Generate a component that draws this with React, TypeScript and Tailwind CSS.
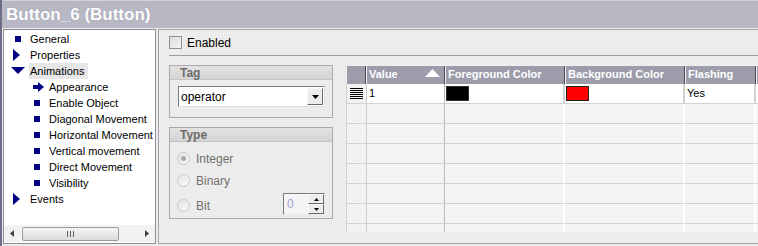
import React from 'react';

const font = { fontFamily: '"Liberation Sans", Arial, sans-serif' };

function Bullet({ x }: { x: number }) {
  return <span className="absolute top-[5px] w-[6px] h-[6px] bg-[#000080]" style={{ left: x }} />;
}

function TreeRow({ label, level, icon, active }: { label: string; level: 1 | 2; icon: 'bullet' | 'right' | 'down' | 'arrow'; active?: boolean }) {
  const textLeft = level === 1 ? 26 : 45;
  return (
    <div className="relative h-[16px] leading-[16px] text-[11px] text-black whitespace-nowrap">
      {icon === 'bullet' && <Bullet x={level === 1 ? 11 : 30} />}
      {icon === 'right' && (
        <svg className="absolute left-[9px] top-[2px]" width="7" height="12" viewBox="0 0 7 12">
          <path d="M0 0 L7 6 L0 12 Z" fill="#000080" />
        </svg>
      )}
      {icon === 'down' && (
        <svg className="absolute left-[7px] top-[4px]" width="14" height="7" viewBox="0 0 14 7">
          <path d="M0 0 L14 0 L7 7 Z" fill="#000080" />
        </svg>
      )}
      {icon === 'arrow' && (
        <svg className="absolute left-[29px] top-[3px]" width="11" height="10" viewBox="0 0 11 10">
          <path d="M0 3 L5 3 L5 0 L11 5 L5 10 L5 7 L0 7 Z" fill="#000080" />
        </svg>
      )}
      <span
        className={`absolute top-0 h-[16px] pr-[4px] ${active ? 'bg-[#e6e6e6]' : ''}`}
        style={{ left: textLeft - 1, paddingLeft: 1 }}
      >
        {label}
      </span>
    </div>
  );
}

function GroupBox({ title, className, children }: { title: string; className?: string; children: React.ReactNode }) {
  return (
    <div className={`border border-[#a9a9a9] flex flex-col ${className ?? ''}`}>
      <div className="h-[14px] bg-gradient-to-b from-[#e2e2e2] to-[#d4d4d4] border-b border-[#c4c4c4] pl-[10px] text-[12px] font-bold text-[#6c6c6c] leading-[14px]">
        {title}
      </div>
      {children}
    </div>
  );
}

function Radio({ label, checked }: { label: string; checked?: boolean }) {
  return (
    <div className="flex items-center h-[13px] text-[12px] text-[#707070]">
      <span className="w-[13px] h-[13px] rounded-full border border-[#c8c8c8] bg-gradient-to-br from-[#e4e4e4] to-[#f8f8f8] flex items-center justify-center">
        {checked && <span className="w-[5px] h-[5px] rounded-full bg-[#a8a8a8]" />}
      </span>
      <span className="ml-[6px]">{label}</span>
    </div>
  );
}

function HeaderCell({ w, children, className }: { w: number; children?: React.ReactNode; className?: string }) {
  return (
    <div
      className={`relative h-full shrink-0 border-l border-[#f0f0f4] border-r border-r-[#4a4a52] pl-[2px] text-white font-bold text-[11px] leading-[17px] whitespace-nowrap ${className ?? ''}`}
      style={{ width: w }}
    >
      {children}
    </div>
  );
}

const cols = [20, 79, 120, 120, 71, 40];

function GridRow({ first }: { first?: boolean }) {
  return (
    <div className={`flex h-[20px] shrink-0 ${first ? 'bg-white' : 'bg-[#f4f4f4]'}`}>
      <div className="shrink-0 w-[20px] h-full border-l border-l-[#cfcfcf] border-b border-b-[#d2d2d2] bg-[#f2f2f2] flex items-center justify-center">
        {first && (
          <svg width="13" height="12" viewBox="0 0 13 12">
            {[0.5, 2.5, 4.5, 6.5, 8.5, 10.5].map(y => (
              <line key={y} x1="0" x2="13" y1={y} y2={y} stroke="#000" strokeWidth="1" />
            ))}
          </svg>
        )}
      </div>
      <div className="shrink-0 w-[79px] h-full border-l border-[#c9c9cf] border-r border-r-[#b9b9c1] border-b border-b-[#d2d2d2] pl-[2px] text-[11px] leading-[19px]">
        {first && '1'}
      </div>
      <div className={`shrink-0 w-[120px] h-full border-b border-[#d2d2d2] border-r-2 ${first ? 'border-r-[#d2d2d2]' : 'border-r-white'} pt-[2px] pl-[1px]`}>
        {first && <div className="w-[23px] h-[15px] bg-black border border-[#303030]" />}
      </div>
      <div className={`shrink-0 w-[120px] h-full border-b border-[#d2d2d2] border-r-2 ${first ? 'border-r-[#d2d2d2]' : 'border-r-white'} pt-[2px] pl-[1px]`}>
        {first && <div className="w-[23px] h-[15px] bg-[#ff0000] border border-[#202020]" />}
      </div>
      <div className={`shrink-0 w-[71px] h-full border-b border-[#d2d2d2] border-r-2 ${first ? 'border-r-[#d2d2d2]' : 'border-r-white'} pl-[2px] text-[11px] leading-[19px]`}>
        {first && 'Yes'}
      </div>
      <div className="shrink-0 w-[40px] h-full border-b border-[#d2d2d2]" />
    </div>
  );
}

export default function App() {
  return (
    <div className="w-[758px] h-[246px] overflow-hidden bg-[#ececec] flex flex-col border-l-2 border-[#6e6e88]" style={font}>
      {/* Title bar */}
      <div className="h-[28px] shrink-0 bg-[#b8b8c4] border-t border-[#d0d0da] pl-[4px] flex items-center text-white font-bold text-[17px] [text-shadow:0_0_1px_#8888a0]">
        Button_6 (Button)
      </div>

      <div className="flex flex-1 min-h-0 pt-[1px] pb-[2px] pl-[1px]">
        {/* Tree */}
        <div className="w-[153px] shrink-0 bg-white border border-[#8c8c98] flex flex-col overflow-hidden">
          <div className="flex-1 pt-[1px]">
            <TreeRow label="General" level={1} icon="bullet" />
            <TreeRow label="Properties" level={1} icon="right" />
            <TreeRow label="Animations" level={1} icon="down" active />
            <TreeRow label="Appearance" level={2} icon="arrow" />
            <TreeRow label="Enable Object" level={2} icon="bullet" />
            <TreeRow label="Diagonal Movement" level={2} icon="bullet" />
            <TreeRow label="Horizontal Movement" level={2} icon="bullet" />
            <TreeRow label="Vertical movement" level={2} icon="bullet" />
            <TreeRow label="Direct Movement" level={2} icon="bullet" />
            <TreeRow label="Visibility" level={2} icon="bullet" />
            <TreeRow label="Events" level={1} icon="right" />
          </div>
          {/* horizontal scrollbar */}
          <div className="h-[17px] shrink-0 bg-[#f2f2f2] flex items-center px-[6px] mb-[1px]">
            <svg width="4" height="7" viewBox="0 0 4 7"><path d="M4 0 L0 3.5 L4 7 Z" fill="#404040" /></svg>
            <div className="ml-[8px] w-[97px] h-[14px] rounded-[2px] border border-[#9a9a9a] bg-gradient-to-b from-[#f4f4f4] to-[#dcdcdc] flex items-center justify-center gap-[2px]">
              <span className="w-px h-[6px] bg-[#606060]" />
              <span className="w-px h-[6px] bg-[#606060]" />
              <span className="w-px h-[6px] bg-[#606060]" />
            </div>
            <div className="flex-1" />
            <svg width="4" height="7" viewBox="0 0 4 7"><path d="M0 0 L4 3.5 L0 7 Z" fill="#404040" /></svg>
          </div>
        </div>

        {/* Right panel */}
        <div className="flex-1 ml-[2px] border border-[#a4a4a4] border-r-0 bg-[#ececec] flex flex-col">
          <div className="h-[26px] shrink-0 ml-[10px] border-b border-[#9e9e9e] flex items-center">
            <span className="w-[13px] h-[13px] border border-[#8e8f8f] bg-gradient-to-br from-[#dcdcdc] to-[#f4f4f4]" />
            <span className="ml-[5px] text-[12px] text-black">Enabled</span>
          </div>

          <div className="flex flex-1 min-h-0 pt-[9px]">
            <div className="w-[164px] ml-[10px] shrink-0 flex flex-col">
              <GroupBox title="Tag" className="h-[53px]">
                <div className="pl-[8px] pr-[7px] pt-[6px]">
                  <div className="h-[21px] bg-white border border-[#7a7a7a] border-r-[#e0e0e0] border-b-[#e0e0e0] flex items-center">
                    <span className="flex-1 pl-[2px] text-[12px] text-black">operator</span>
                    <span className="w-[16px] h-[17px] mr-[1px] bg-[#ececec] border border-[#f8f8f8] border-r-[#6a6a6a] border-b-[#6a6a6a] flex items-center justify-center">
                      <svg width="7" height="4" viewBox="0 0 7 4"><path d="M0 0 L7 0 L3.5 4 Z" fill="#000" /></svg>
                    </span>
                  </div>
                </div>
              </GroupBox>

              <GroupBox title="Type" className="h-[92px] mt-[9px]">
                <div className="flex flex-col pl-[7px] pt-[10px] gap-[9px]">
                  <Radio label="Integer" checked />
                  <Radio label="Binary" />
                  <div className="flex items-center">
                    <Radio label="Bit" />
                    <div className="ml-auto mr-[7px] -mt-[3px] w-[42px] h-[22px] bg-[#f4f4f4] border border-[#7a7a7a] border-r-[#e8e8e8] border-b-[#e8e8e8] flex items-center">
                      <span className="flex-1 pl-[3px] text-[12px] text-[#a0a0d8]">0</span>
                      <div className="w-[16px] h-full flex flex-col">
                        <span className="flex-1 bg-[#ececec] border border-[#f8f8f8] border-r-[#6a6a6a] border-b-[#6a6a6a] flex items-center justify-center">
                          <svg width="5" height="3" viewBox="0 0 5 3"><path d="M0 3 L5 3 L2.5 0 Z" fill="#000" /></svg>
                        </span>
                        <span className="flex-1 bg-[#ececec] border border-[#f8f8f8] border-r-[#6a6a6a] border-b-[#6a6a6a] flex items-center justify-center">
                          <svg width="5" height="3" viewBox="0 0 5 3"><path d="M0 0 L5 0 L2.5 3 Z" fill="#000" /></svg>
                        </span>
                      </div>
                    </div>
                  </div>
                </div>
              </GroupBox>
            </div>

            {/* Grid */}
            <div className="ml-[13px] flex-1 min-w-0 h-[167px] overflow-hidden bg-[#f4f4f4] flex flex-col">
              <div className="flex h-[19px] shrink-0 bg-[#9c9caa] border-t border-[#f0f0f4]">
                <HeaderCell w={cols[0]} />
                <HeaderCell w={cols[1]}>
                  Value
                  <svg className="absolute right-[4px] top-[3px]" width="15" height="8" viewBox="0 0 15 8">
                    <path d="M0 8 L15 8 L7.5 0 Z" fill="#fff" />
                  </svg>
                </HeaderCell>
                <HeaderCell w={cols[2]}>Foreground Color</HeaderCell>
                <HeaderCell w={cols[3]}>Background Color</HeaderCell>
                <HeaderCell w={cols[4]}>Flashing</HeaderCell>
                <HeaderCell w={cols[5]} />
              </div>
              <GridRow first />
              <GridRow />
              <GridRow />
              <GridRow />
              <GridRow />
              <GridRow />
              <GridRow />
              <GridRow />
            </div>
          </div>
        </div>
      </div>
    </div>
  );
}
